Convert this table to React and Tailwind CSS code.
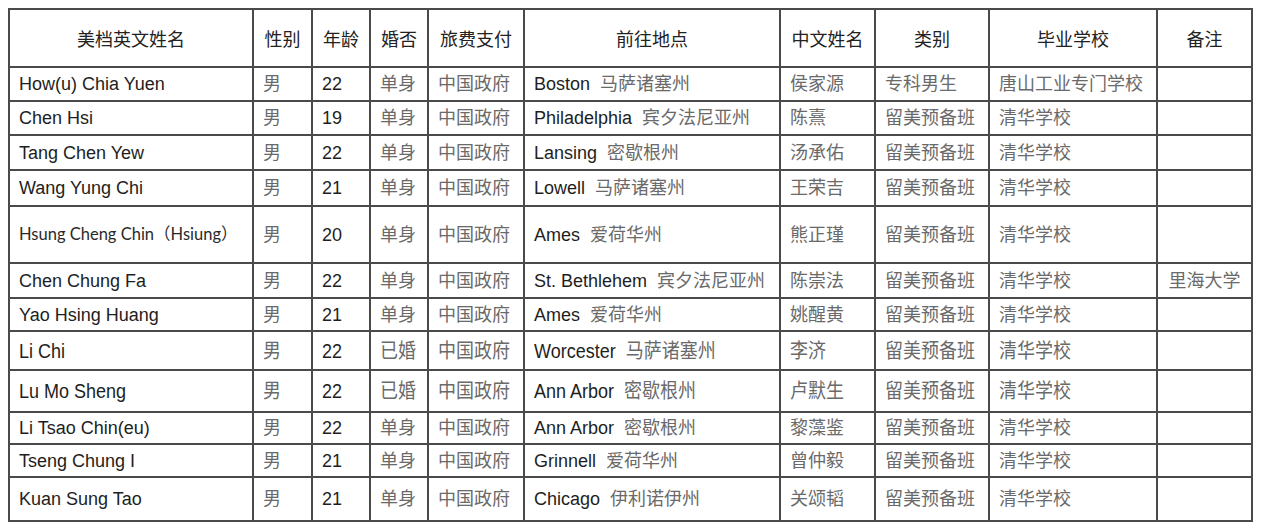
const HEADERS = ["美档英文姓名", "性别", "年龄", "婚否", "旅费支付", "前往地点", "中文姓名", "类别", "毕业学校", "备注"];
const COLS = [244, 59, 58, 58, 96, 256, 95, 114, 168, 95];

const ROWS = [
  { h: "h-[34px]", name: "How(u) Chia Yuen", age: "22", mar: "单身", city: "Boston", state: "马萨诸塞州", cn: "侯家源", type: "专科男生", school: "唐山工业专门学校", note: "" },
  { h: "h-[34px]", name: "Chen Hsi", age: "19", mar: "单身", city: "Philadelphia", state: "宾夕法尼亚州", cn: "陈熹", type: "留美预备班", school: "清华学校", note: "" },
  { h: "h-[35px]", name: "Tang Chen Yew", age: "22", mar: "单身", city: "Lansing", state: "密歇根州", cn: "汤承佑", type: "留美预备班", school: "清华学校", note: "" },
  { h: "h-[36px]", name: "Wang Yung Chi", age: "21", mar: "单身", city: "Lowell", state: "马萨诸塞州", cn: "王荣吉", type: "留美预备班", school: "清华学校", note: "" },
  { h: "h-[57px]", name: "Hsung Cheng Chin（Hsiung）", odd: true, age: "20", mar: "单身", city: "Ames", state: "爱荷华州", cn: "熊正瑾", type: "留美预备班", school: "清华学校", note: "" },
  { h: "h-[35px]", name: "Chen Chung Fa", age: "22", mar: "单身", city: "St. Bethlehem", state: "宾夕法尼亚州", cn: "陈崇法", type: "留美预备班", school: "清华学校", note: "里海大学" },
  { h: "h-[33px]", name: "Yao Hsing Huang", age: "21", mar: "单身", city: "Ames", state: "爱荷华州", cn: "姚醒黄", type: "留美预备班", school: "清华学校", note: "" },
  { h: "h-[39px]", tall: true, name: "Li Chi", age: "22", mar: "已婚", city: "Worcester", state: "马萨诸塞州", cn: "李济", type: "留美预备班", school: "清华学校", note: "" },
  { h: "h-[42px]", tall: true, name: "Lu Mo Sheng", age: "22", mar: "已婚", city: "Ann Arbor", state: "密歇根州", cn: "卢默生", type: "留美预备班", school: "清华学校", note: "" },
  { h: "h-[32px]", name: "Li Tsao Chin(eu)", age: "22", mar: "单身", city: "Ann Arbor", state: "密歇根州", cn: "黎藻鉴", type: "留美预备班", school: "清华学校", note: "" },
  { h: "h-[33px]", name: "Tseng Chung I", age: "21", mar: "单身", city: "Grinnell", state: "爱荷华州", cn: "曾仲毅", type: "留美预备班", school: "清华学校", note: "" },
  { h: "h-[44px]", name: "Kuan Sung Tao", age: "21", mar: "单身", city: "Chicago", state: "伊利诺伊州", cn: "关颂韬", type: "留美预备班", school: "清华学校", note: "" },
];

const cell = "border-2 border-[#4a4a4a] px-[9px] py-0 align-middle whitespace-nowrap";
const en = "font-['Liberation_Sans','Noto_Sans_CJK_SC',sans-serif] text-[18px] text-[#1e1e1e]";
const zh = "font-['Noto_Sans_CJK_SC',sans-serif] text-[18px] text-[#6a6a6a]";

function Txt({ tall, className, children }) {
  // rows 8 and 9 are slightly stretched vertically in the scan
  return <span className={`inline-block leading-none ${tall ? "scale-y-[1.12]" : ""} ${className}`}>{children}</span>;
}

export default function App() {
  return (
    <div className="min-h-screen bg-white pl-[8px] pt-[8px]">
      <table className="border-collapse table-fixed w-[1243px]">
        <colgroup>
          {COLS.map((w, i) => (
            <col key={i} style={{ width: w }} />
          ))}
        </colgroup>
        <thead>
          <tr className="h-[58px]">
            {HEADERS.map((t) => (
              <th key={t} className={`${cell} text-center font-normal font-['Noto_Sans_CJK_SC',sans-serif] text-[18px] text-[#222]`}>
                {t}
              </th>
            ))}
          </tr>
        </thead>
        <tbody>
          {ROWS.map((r) => (
            <tr key={r.name} className={r.h}>
              <td className={cell}>
                {r.odd ? (
                  <span className="font-['Lato','Noto_Sans_CJK_SC',sans-serif] text-[16.5px] text-[#2a2a2a]">{r.name}</span>
                ) : (
                  <Txt tall={r.tall} className={en}>{r.name}</Txt>
                )}
              </td>
              <td className={cell}>
                <Txt tall={r.tall} className={zh}>男</Txt>
              </td>
              <td className={cell}>
                <Txt tall={r.tall} className={en}>{r.age}</Txt>
              </td>
              <td className={cell}>
                <Txt tall={r.tall} className={zh}>{r.mar}</Txt>
              </td>
              <td className={cell}>
                <Txt tall={r.tall} className={zh}>中国政府</Txt>
              </td>
              <td className={cell}>
                <Txt tall={r.tall} className={en}>{r.city}</Txt>
                <Txt tall={r.tall} className={`${zh} ml-[10px]`}>{r.state}</Txt>
              </td>
              <td className={cell}>
                <Txt tall={r.tall} className={zh}>{r.cn}</Txt>
              </td>
              <td className={cell}>
                <Txt tall={r.tall} className={zh}>{r.type}</Txt>
              </td>
              <td className={cell}>
                <Txt tall={r.tall} className={zh}>{r.school}</Txt>
              </td>
              <td className={`${cell} text-center`}>
                <Txt tall={r.tall} className={zh}>{r.note}</Txt>
              </td>
            </tr>
          ))}
        </tbody>
      </table>
    </div>
  );
}
